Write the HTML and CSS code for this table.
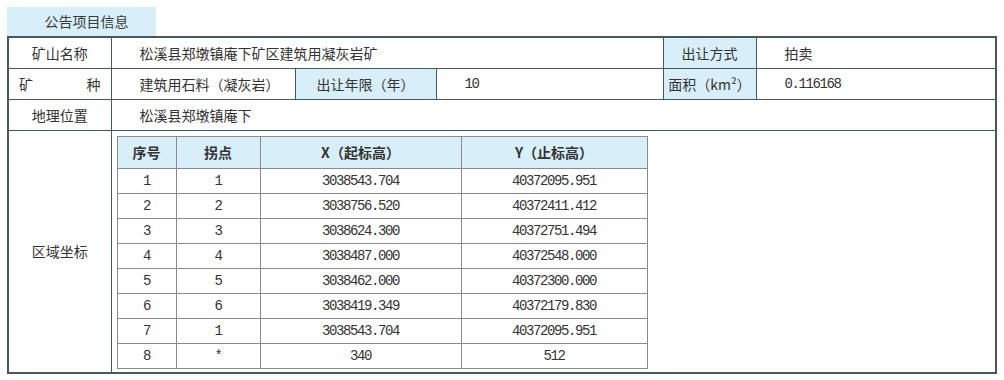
FILE: index.html
```html
<!DOCTYPE html>
<html lang="zh-CN">
<head>
<meta charset="utf-8">
<title>公告项目信息</title>
<link rel="stylesheet" href="styles.css">
</head>
<body>
<div class="page">
  <div class="tab">公告项目信息</div>
  <table class="info">
    <colgroup>
      <col class="c1"><col class="c2"><col class="c3"><col class="c4"><col class="c5"><col class="c6">
    </colgroup>
    <tr class="row">
      <td class="label">矿山名称</td>
      <td class="value" colspan="3">松溪县郑墩镇庵下矿区建筑用凝灰岩矿</td>
      <td class="label blue">出让方式</td>
      <td class="value">拍卖</td>
    </tr>
    <tr class="row">
      <td class="label justify">矿种</td>
      <td class="value">建筑用石料（凝灰岩）</td>
      <td class="label blue">出让年限（年）</td>
      <td class="value num">10</td>
      <td class="label blue">面积（km²）</td>
      <td class="value num">0.116168</td>
    </tr>
    <tr class="row">
      <td class="label">地理位置</td>
      <td class="value" colspan="5">松溪县郑墩镇庵下</td>
    </tr>
    <tr class="coords">
      <td class="label">区域坐标</td>
      <td class="holder" colspan="5">
        <table class="pts">
          <colgroup><col class="p1"><col class="p2"><col class="p3"><col class="p4"></colgroup>
          <tr class="head"><th>序号</th><th>拐点</th><th>X（起标高）</th><th>Y（止标高）</th></tr>
          <tr><td class="num">1</td><td class="num">1</td><td class="num">3038543.704</td><td class="num">40372095.951</td></tr>
          <tr><td class="num">2</td><td class="num">2</td><td class="num">3038756.520</td><td class="num">40372411.412</td></tr>
          <tr><td class="num">3</td><td class="num">3</td><td class="num">3038624.300</td><td class="num">40372751.494</td></tr>
          <tr><td class="num">4</td><td class="num">4</td><td class="num">3038487.000</td><td class="num">40372548.000</td></tr>
          <tr><td class="num">5</td><td class="num">5</td><td class="num">3038462.000</td><td class="num">40372300.000</td></tr>
          <tr><td class="num">6</td><td class="num">6</td><td class="num">3038419.349</td><td class="num">40372179.830</td></tr>
          <tr><td class="num">7</td><td class="num">1</td><td class="num">3038543.704</td><td class="num">40372095.951</td></tr>
          <tr><td class="num">8</td><td class="num">*</td><td class="num">340</td><td class="num">512</td></tr>
        </table>
      </td>
    </tr>
  </table>
</div>
</body>
</html>
```
FILE: styles.css
```css
html, body {
  margin: 0;
  padding: 0;
  background: #ffffff;
}

body {
  font-family: "Noto Sans CJK SC", "Noto Sans", sans-serif;
  font-size: 14px;
  color: #333333;
}

.page {
  padding: 7px 0 0 7px;
  width: 988px;
}

.tab {
  width: 149px;
  height: 29px;
  line-height: 29px;
  background: #d8eef9;
  text-align: center;
  padding-left: 10px;
  box-sizing: border-box;
  font-size: 14px;
  color: #3a3a3a;
}

.info {
  width: 988px;
  border-collapse: collapse;
  table-layout: fixed;
  border: 2px solid #445a5b;
}

.info col.c1 { width: 103px; }
.info col.c2 { width: 184px; }
.info col.c3 { width: 141px; }
.info col.c4 { width: 227px; }
.info col.c5 { width: 93px; }
.info col.c6 { width: 240px; }

.info > tbody > tr > td {
  border: 1px solid #445a5b;
  padding: 0;
  box-sizing: border-box;
}

.info .row > td {
  height: 31px;
  line-height: 20px;
}

.label {
  text-align: center;
  white-space: nowrap;
}

.label.blue {
  background: #d8eef9;
}

.label.justify {
  text-align: justify;
  text-align-last: justify;
  padding: 0 10px !important;
}

.value {
  padding-left: 28px !important;
  white-space: nowrap;
}

.num {
  font-family: "Liberation Mono", "DejaVu Sans Mono", monospace;
  font-size: 14px;
  letter-spacing: -1.4px;
}

.coords > td {
  height: 243px;
}

.holder {
  vertical-align: top;
  padding: 5px 0 0 5px !important;
}

.pts {
  border-collapse: collapse;
  table-layout: fixed;
  width: 530px;
  border: 1px solid #8a8a8a;
}

.pts col.p1 { width: 59px; }
.pts col.p2 { width: 84px; }
.pts col.p3 { width: 201px; }
.pts col.p4 { width: 186px; }

.pts th, .pts td {
  border: 1px solid #8a8a8a;
  text-align: center;
  padding: 0;
  color: #333333;
}

.pts .head th {
  height: 31px;
  background: #d8eef9;
  font-weight: bold;
  font-size: 14px;
}

.pts td {
  height: 24px;
  line-height: 18px;
}
```
